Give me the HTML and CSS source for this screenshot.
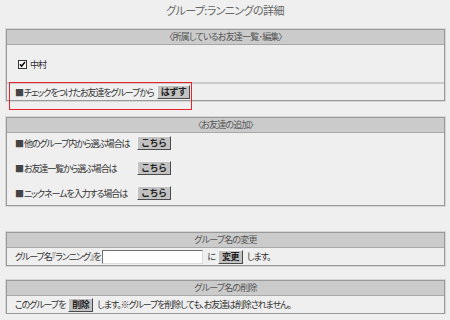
FILE: index.html
```html
<!DOCTYPE html>
<html lang="ja">
<head>
  <meta charset="UTF-8">
  <title>グループ:ランニングの詳細</title>
  <link rel="stylesheet" href="styles.css">
</head>
<body>
  <h1 class="title">グループ:ランニングの詳細</h1>

  <div class="panel members">
    <div class="panel-head">〈所属しているお友達一覧･編集〉</div>
    <div class="member-list">
      <label class="member">
        <svg class="check" width="9" height="9" viewBox="0 0 9 9">
          <rect x="0.5" y="0.5" width="8" height="8" fill="#fff" stroke="#333"/>
          <path d="M2 4.2 L3.6 6.2 L7 2" fill="none" stroke="#111" stroke-width="1.6"/>
        </svg>
        中村
      </label>
    </div>
    <div class="panel-row">
      <span class="bullet">■</span>チェックをつけたお友達をグループから<button class="btn">はずす</button>
    </div>
    <div class="mark"></div>
  </div>

  <div class="panel add">
    <div class="panel-head">〈お友達の追加〉</div>
    <div class="add-grid">
      <span><span class="bullet">■</span>他のグループ内から選ぶ場合は</span>
      <button class="btn">こちら</button>
      <span><span class="bullet">■</span>お友達一覧から選ぶ場合は</span>
      <button class="btn">こちら</button>
      <span><span class="bullet">■</span>ニックネームを入力する場合は</span>
      <button class="btn">こちら</button>
    </div>
  </div>

  <div class="panel rename">
    <div class="panel-head">グループ名の変更</div>
    <div class="panel-row">
      グループ名『ランニング』を<input class="name-input" type="text"><span class="gap">に</span><button class="btn">変更</button><span class="gap">します。</span>
    </div>
  </div>

  <div class="panel remove">
    <div class="panel-head">グループ名の削除</div>
    <div class="panel-row">
      このグループを<button class="btn">削除</button><span class="gap">します。※グループを削除しても、お友達は削除されません。</span>
    </div>
  </div>
</body>
</html>
```

FILE: styles.css
```css
* {
  box-sizing: border-box;
}

body {
  margin: 0;
  padding: 0 6px;
  background: #efefef;
  color: #333;
  font-family: "Noto Sans CJK JP", sans-serif;
  font-size: 9px;
  letter-spacing: -1.1px;
  font-feature-settings: "palt";
}

.title {
  margin: 0 0 9px;
  height: 20px;
  line-height: 20px;
  text-align: center;
  font-size: 11px;
  letter-spacing: -0.6px;
  font-weight: normal;
  color: #666;
}

.panel {
  position: relative;
  width: 439px;
  border: 1px solid #999;
  box-shadow: 0 0 0 1px #d6d6d6;
}

.panel-head {
  height: 15px;
  line-height: 14px;
  text-align: center;
  background: #cbcbcb;
  border-bottom: 1px solid #a8a8a8;
  color: #555;
  letter-spacing: -0.8px;
}

.panel-row {
  display: flex;
  align-items: center;
  height: 17px;
  padding-left: 8px;
  white-space: nowrap;
}

.bullet {
  color: #444;
  margin-right: 1px;
}

.member-list {
  height: 39px;
  padding: 13px 0 0 11px;
  border-bottom: 2px solid #cbcbcb;
}

.member {
  display: flex;
  align-items: center;
  gap: 3px;
}

.members .panel-row {
  height: 16px;
}

.mark {
  position: absolute;
  left: 2px;
  top: 52px;
  width: 183px;
  height: 28px;
  border: 1px solid #e8242a;
}

.add {
  margin-top: 16px;
}

.add-grid {
  display: grid;
  grid-template-columns: 122px auto;
  grid-auto-rows: 20px;
  row-gap: 5px;
  justify-content: start;
  align-items: center;
  padding: 0 0 2px 8px;
  white-space: nowrap;
}

.rename {
  margin-top: 26px;
}

.remove {
  margin-top: 14px;
}

.btn {
  height: 14px;
  margin: 0 0 0 3px;
  padding: 0 3px;
  font: bold 9px/12px "Noto Sans CJK JP", sans-serif;
  letter-spacing: -0.5px;
  color: #222;
  background: #c2c2c2;
  border: 1px solid;
  border-color: #f4f4f4 #4a4a4a #4a4a4a #f4f4f4;
}

.add-grid .btn {
  justify-self: start;
  margin-left: 0;
}

.name-input {
  width: 101px;
  height: 14px;
  margin: 0 0 0 2px;
  padding: 0;
  background: #fff;
  border: 1px solid;
  border-color: #6e6e6e #dcdcdc #dcdcdc #6e6e6e;
}

.gap {
  margin-left: 4px;
}
```
